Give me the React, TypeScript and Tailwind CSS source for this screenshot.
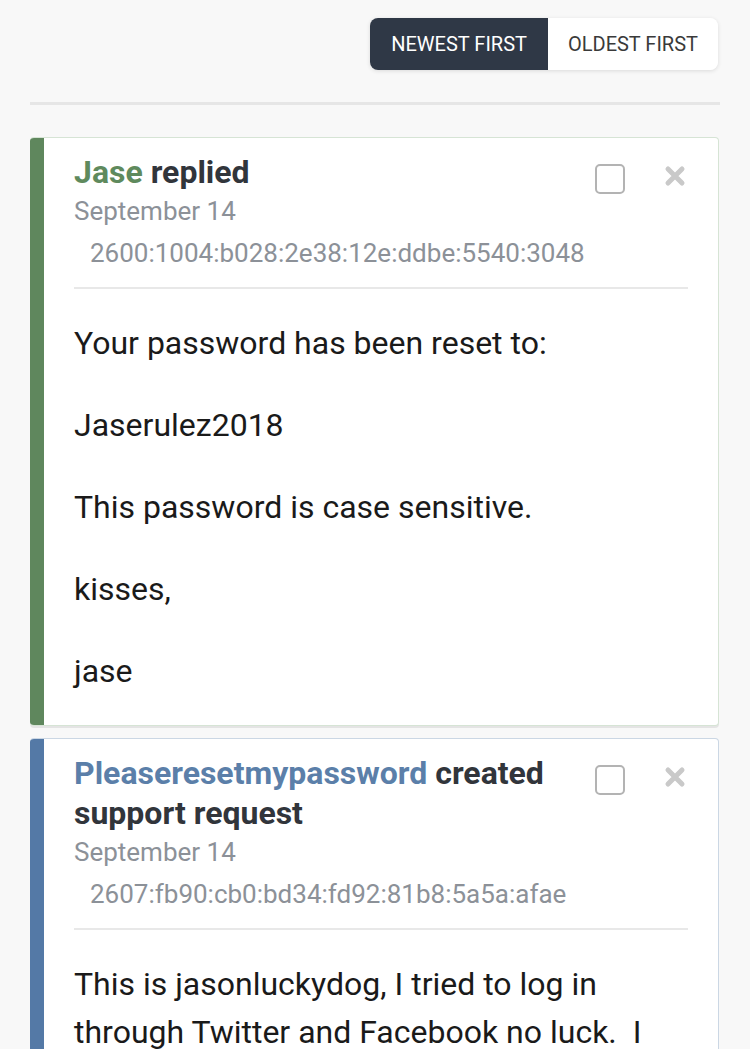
import { FC, ReactNode } from "react";

interface ActivityCardProps {
  who: string;
  action: string;
  date: string;
  ip: string;
  barColor: string;
  borderColor: string;
  nameColor: string;
  children: ReactNode;
}

const CloseIcon: FC = () => (
  <svg width="22" height="22" viewBox="0 0 22 22" className="block mt-[1px]">
    <path
      d="M4 4 L18 18 M18 4 L4 18"
      stroke="#c9c9c9"
      strokeWidth="5"
      strokeLinecap="round"
    />
  </svg>
);

const ActivityCard: FC<ActivityCardProps> = ({
  who,
  action,
  date,
  ip,
  barColor,
  borderColor,
  nameColor,
  children,
}) => {
  return (
    <div
      className={`flex bg-white rounded-[4px] border border-l-0 ${borderColor} shadow-[0_2px_0_rgba(0,0,0,0.08)] overflow-hidden`}
    >
      <div className={`w-[14px] shrink-0 ${barColor}`} />
      <div className="flex-1 pl-[30px] pr-[30px] pt-[14px] pb-[30px]">
        <div className="flex items-start">
          <div className="flex-1 text-[32px] leading-[40px] font-bold text-[#31353b] pr-6">
            <span className={nameColor}>{who}</span> {action}
          </div>
          <div className="flex items-start gap-[39px] mt-[12px] -mb-[4px] mr-[2px]">
            <div className="w-[30px] h-[30px] rounded-[5px] border-2 border-[#b3b3b3] bg-white" />
            <CloseIcon />
          </div>
        </div>
        <div className="text-[26px] leading-[30px] text-[#8c9198] mt-[4px]">{date}</div>
        <div className="text-[26px] leading-[30px] text-[#8c9198] mt-[12px] pl-[16px]">{ip}</div>
        <div className="h-[2px] bg-[#e8e8e8] mt-[19px] mb-[30px]" />
        <div className="text-[32px] leading-[48px] text-[#1a1a1a] flex flex-col gap-[34px]">
          {children}
        </div>
      </div>
    </div>
  );
};

export default function App() {
  return (
    <div
      className="min-h-[1049px] bg-[#f8f8f8] pt-[18px] pl-[30px] pr-[31px]"
      style={{ fontFamily: "Roboto, 'Liberation Sans', sans-serif" }}
    >
      <div className="flex justify-end pr-[1px]">
        <div className="flex rounded-[8px] shadow-[0_1px_4px_rgba(0,0,0,0.12)] overflow-hidden">
          <button className="h-[52px] px-[21px] bg-[#2f3846] text-white text-[20px]">
            NEWEST FIRST
          </button>
          <button className="h-[52px] px-[20px] bg-white text-[#3a3a3a] text-[20px]">
            OLDEST FIRST
          </button>
        </div>
      </div>
      <div className="h-[3px] bg-[#e6e6e6] mt-[32px] mb-[32px] -mr-[1px]" />
      <div className="flex flex-col gap-[12px]">
        <ActivityCard
          who="Jase"
          action="replied"
          date="September 14"
          ip="2600:1004:b028:2e38:12e:ddbe:5540:3048"
          barColor="bg-[#5f875d]"
          borderColor="border-[#d6e4d5]"
          nameColor="text-[#5f8a5d]"
        >
          <p>Your password has been reset to:</p>
          <p>Jaserulez2018</p>
          <p>This password is case sensitive.</p>
          <p>kisses,</p>
          <p>jase</p>
        </ActivityCard>
        <ActivityCard
          who="Pleaseresetmypassword"
          action="created support request"
          date="September 14"
          ip="2607:fb90:cb0:bd34:fd92:81b8:5a5a:afae"
          barColor="bg-[#5479a6]"
          borderColor="border-[#cbd7e4]"
          nameColor="text-[#5b7fa9]"
        >
          <p>
            This is jasonluckydog, I tried to log in through Twitter and Facebook no luck.&nbsp; I
            would like my password reset please.
          </p>
        </ActivityCard>
      </div>
    </div>
  );
}
